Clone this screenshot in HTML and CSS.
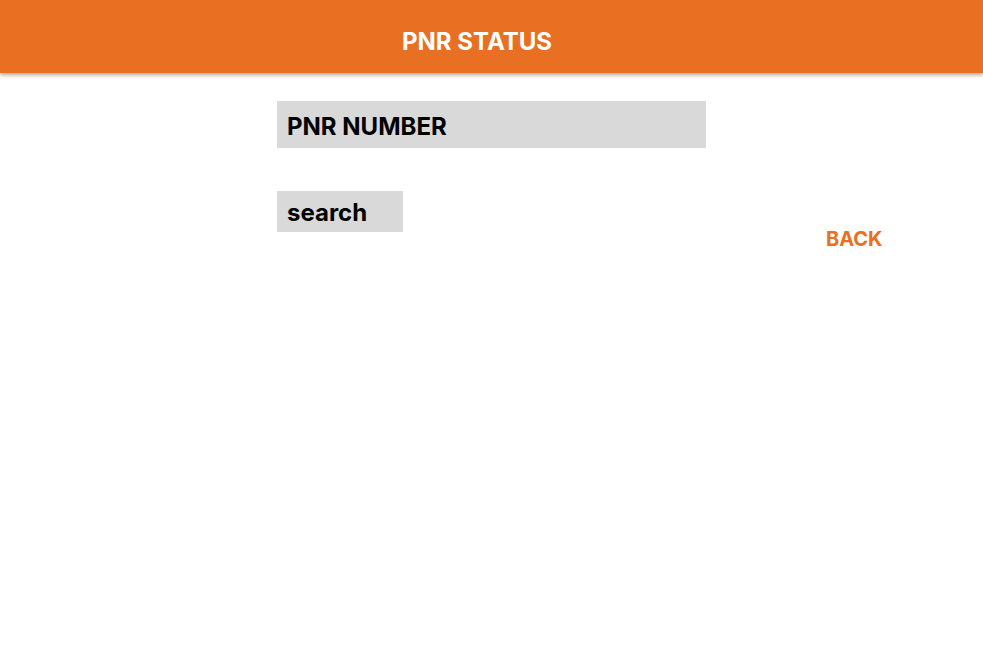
FILE: index.html
```html
<!DOCTYPE html>
<html>
<head>
<meta charset="utf-8">
<link rel="stylesheet" href="styles.css">
</head>
<body>
<header class="topbar"><h1 class="title">PNR STATUS</h1></header>
<main class="content">
  <div class="form">
    <div class="field">PNR NUMBER</div>
    <button class="search">search</button>
  </div>
  <div class="side">
    <a class="back">BACK</a>
  </div>
</main>
</body>
</html>
```
FILE: styles.css
```css
html, body {
  margin: 0;
  padding: 0;
  background: #fff;
  font-family: Inter, "Noto Sans", sans-serif;
}
.topbar {
  height: 73px;
  box-sizing: border-box;
  background: #e97022;
  box-shadow: 0 2px 4px rgba(0,0,0,0.35);
  display: flex;
  align-items: center;
  justify-content: center;
  padding: 9px 29px 0 0;
}
.title {
  margin: 0;
  color: #fff;
  font-size: 24px;
  font-weight: 700;
}
.content {
  display: flex;
  padding-top: 28px;
  padding-left: 277px;
}
.form {
  width: 429px;
  display: flex;
  flex-direction: column;
  align-items: flex-start;
}
.field {
  width: 100%;
  box-sizing: border-box;
  height: 47px;
  background: #d9d9d9;
  padding-left: 10px;
  padding-top: 4px;
  display: flex;
  align-items: center;
  font-size: 24px;
  font-weight: 700;
  color: #000;
}
.search {
  margin-top: 43px;
  width: 126px;
  height: 41px;
  border: 0;
  background: #d9d9d9;
  padding: 2px 0 0 10px;
  text-align: left;
  font-family: inherit;
  font-size: 24px;
  font-weight: 700;
  color: #000;
}
.side {
  padding-left: 120px;
  padding-top: 126px;
}
.back {
  color: #e97022;
  font-size: 20px;
  font-weight: 700;
}
```
